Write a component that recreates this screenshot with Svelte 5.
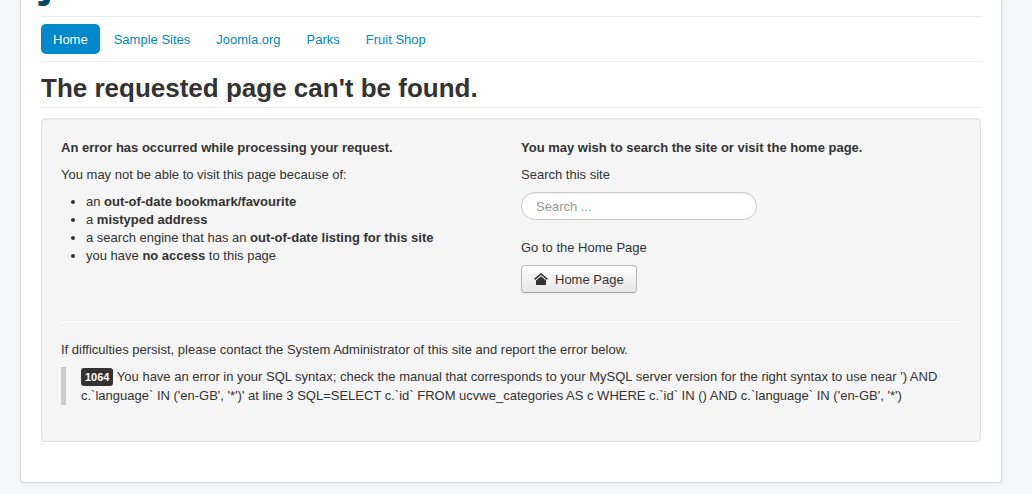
<script>
	let search = "";

	const menu = [
		{ title: "Home", active: true },
		{ title: "Sample Sites" },
		{ title: "Joomla.org" },
		{ title: "Parks" },
		{ title: "Fruit Shop" },
	];
</script>

<div class="body">
	<div class="container">
		<header class="header"><a class="brand" href="#home">j</a></header>
		<nav class="navigation">
			<ul class="nav-pills">
				{#each menu as item}
					<li><a href="#menu" class:active={item.active}>{item.title}</a></li>
				{/each}
			</ul>
		</nav>

		<main>
			<h1 class="page-header">The requested page can't be found.</h1>
			<div class="well">
				<div class="row">
					<div class="column">
						<p><strong>An error has occurred while processing your request.</strong></p>
						<p>You may not be able to visit this page because of:</p>
						<ul class="reasons">
							<li>an <strong>out-of-date bookmark/favourite</strong></li>
							<li>a <strong>mistyped address</strong></li>
							<li>a search engine that has an <strong>out-of-date listing for this site</strong></li>
							<li>you have <strong>no access</strong> to this page</li>
						</ul>
					</div>
					<div class="column">
						<p><strong>You may wish to search the site or visit the home page.</strong></p>
						<form class="search" on:submit|preventDefault>
							<label for="search">Search this site</label>
							<input id="search" type="text" bind:value={search} placeholder="Search ..." />
						</form>
						<p class="go-home">Go to the Home Page</p>
						<button class="btn" type="button">
							<svg width="14" height="12" viewBox="0 0 14 12" aria-hidden="true">
								<path d="M.6 6.4 7 .9l6.4 5.5" fill="none" stroke="currentColor" stroke-width="1.5" />
								<path d="M2 7.6 7 3.3l5 4.3V12H2z" fill="currentColor" />
							</svg>
							Home Page
						</button>
					</div>
				</div>
				<hr />
				<p class="contact">If difficulties persist, please contact the System Administrator of this site and report the error below.</p>
				<blockquote>
					<span class="label">1064</span> You have an error in your SQL syntax; check the manual that corresponds to your MySQL server version for the right syntax to use near ') AND c.`language` IN ('en-GB', '*')' at line 3 SQL=SELECT c.`id` FROM ucvwe_categories AS c WHERE c.`id` IN () AND c.`language` IN ('en-GB', '*')
				</blockquote>
			</div>
		</main>
	</div>
</div>

<style>
	:global(body) {
		margin: 0;
		background-color: #f4f6f7;
	}

	.body {
		padding: 0 30px 11px 20px;
		overflow: hidden;
		color: #333;
		font-family: "Liberation Sans", Arial, sans-serif;
		font-size: 13px;
		line-height: 18px;
	}

	.container {
		padding: 0 20px 40px;
		background-color: #fff;
		border: 1px solid rgba(0, 0, 0, 0.15);
		border-top: 0;
		border-radius: 0 0 4px 4px;
		box-shadow: 0 0 6px rgba(0, 0, 0, 0.05);
	}

	.header {
		display: flex;
		align-items: flex-end;
		height: 16px;
	}

	.brand {
		padding-bottom: 14px;
		color: #004466;
		font-family: "Open Sans", sans-serif;
		font-size: 40px;
		font-weight: bold;
		line-height: 40px;
		text-decoration: none;
	}

	.navigation {
		padding: 7px 0;
		border-top: 1px solid #eee;
		border-bottom: 1px solid #eee;
	}

	.nav-pills {
		display: flex;
		gap: 2px;
		margin: 0;
		padding: 0;
		list-style: none;
	}

	.nav-pills a {
		display: block;
		padding: 7px 12px 5px;
		border-radius: 5px;
		color: #08c;
		text-decoration: none;
	}

	.nav-pills a.active {
		background-color: #08c;
		color: #fff;
	}

	.page-header {
		margin: 8px 0 10px;
		padding-bottom: 1px;
		border-bottom: 1px solid #eee;
		font-size: 26px;
		line-height: 36px;
	}

	.well {
		padding: 20px 19px 19px;
		background-color: #f5f5f5;
		border: 1px solid #e3e3e3;
		border-radius: 4px;
		box-shadow: inset 0 1px 1px rgba(0, 0, 0, 0.05);
	}

	.row {
		display: flex;
		gap: 20px;
		padding-bottom: 9px;
	}

	.column {
		flex: 1;
	}

	p {
		margin: 0 0 9px;
	}

	.reasons {
		margin: 0;
		padding-left: 25px;
	}

	.search {
		margin-bottom: 19px;
	}

	.search label {
		display: block;
		margin-bottom: 8px;
	}

	.search input {
		display: block;
		box-sizing: border-box;
		width: 236px;
		max-width: 100%;
		height: 28px;
		padding: 4px 14px;
		background-color: #fff;
		border: 1px solid #ccc;
		border-radius: 15px;
		box-shadow: inset 0 1px 1px rgba(0, 0, 0, 0.075);
		color: #555;
		font: inherit;
	}

	.search input::placeholder {
		color: #999;
	}

	.go-home,
	.contact {
		margin-bottom: 8px;
	}

	.btn {
		display: flex;
		align-items: center;
		gap: 7px;
		padding: 5px 12px 3px;
		background-image: linear-gradient(#fff, #e6e6e6);
		border: 1px solid #bbb;
		border-bottom-color: #a2a2a2;
		border-radius: 4px;
		box-shadow: inset 0 1px 0 rgba(255, 255, 255, 0.2), 0 1px 2px rgba(0, 0, 0, 0.05);
		color: #333;
		font: inherit;
		cursor: pointer;
	}

	.btn svg {
		margin-bottom: 2px;
	}

	hr {
		margin: 18px 0 19px;
		border: 0;
		border-top: 1px solid #eee;
		border-bottom: 1px solid #fff;
	}

	blockquote {
		margin: 0 0 17px;
		padding-left: 15px;
		border-left: 5px solid #ccc;
		line-height: 19px;
	}

	.label {
		padding: 3px 4px;
		background-color: #333;
		border-radius: 3px;
		color: #fff;
		font-size: 11px;
		font-weight: bold;
		line-height: 14px;
	}
</style>
